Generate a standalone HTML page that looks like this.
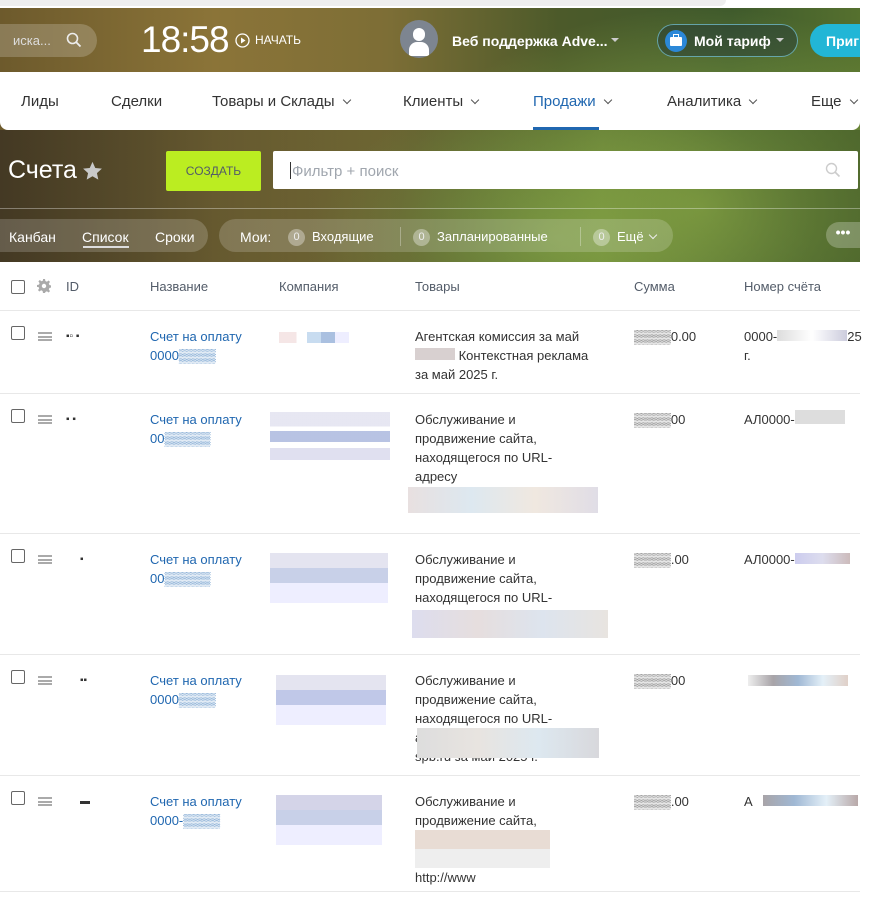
<!DOCTYPE html><html><head><meta charset="utf-8"><style>
*{margin:0;padding:0;box-sizing:border-box}
body{width:879px;height:908px;background:#fff;font-family:"Liberation Sans","Noto Sans CJK SC",sans-serif;position:relative;overflow:hidden;color:#333}
.bg{position:absolute;left:0;top:8px;width:860px;height:255px;background:radial-gradient(ellipse 300px 200px at 700px 200px,#8fae48 0%,rgba(120,150,60,0) 100%),radial-gradient(ellipse 250px 150px at 560px 230px,#7c9a45,rgba(0,0,0,0)),linear-gradient(90deg,#6d5a2c 0%,#8b7438 25%,#7d6e36 45%,#4c5a2a 65%,#3f5a2c 85%,#55702e 100%)}
.bgb{position:absolute;left:0;top:130px;width:860px;height:133px;background:linear-gradient(90deg,rgba(40,35,30,.6) 0%,rgba(60,70,40,.3) 40%,rgba(90,120,50,.2) 70%,rgba(40,60,30,.4) 100%)}
.topstrip{position:absolute;left:0;top:0;width:726px;height:6px;background:#eee;border-radius:0 0 6px 0}
.a{position:absolute;white-space:nowrap}
.nav{position:absolute;left:0;top:72px;width:860px;height:58px;background:#fff;border-radius:0 0 8px 8px}
.nav span{position:absolute;top:21px;font-size:15px;color:#333}
.chev{display:inline-block;width:6px;height:6px;border-right:1.5px solid #555;border-bottom:1.5px solid #555;transform:rotate(45deg);margin-left:9px;position:relative;top:-3px}
.pill{position:absolute;background:rgba(255,255,255,.18);border-radius:18px}
.cnt{display:inline-block;width:17px;height:17px;border-radius:9px;background:rgba(255,255,255,.35);font-size:11px;text-align:center;line-height:17px;color:#eee;margin-right:7px;vertical-align:middle}
.t{position:absolute;font-size:13px;line-height:19px;color:#333}
.l{color:#2067b0}
.hl{position:absolute;left:0;width:860px;height:1px;background:#e8e8e8}
.cb{position:absolute;left:11px;width:14px;height:14px;border:1.5px solid #666;border-radius:2px}
.ham{position:absolute;left:38px;width:14px;height:9px;border-top:2px solid #aaa;border-bottom:2px solid #aaa}
.ham:after{content:"";position:absolute;left:0;top:1.5px;width:14px;height:2px;background:#aaa}
.px{position:absolute;height:11px}
</style></head><body>
<div class="topstrip"></div>
<div class="bg"></div><div class="bgb"></div>
<div class="a" style="left:0;top:24px;width:97px;height:33px;border-radius:0 17px 17px 0;background:rgba(255,255,255,.2)"></div>
<div class="a" style="left:13px;top:33px;font-size:13px;color:#ddd">иска...</div>
<svg class="a" style="left:66px;top:32px" width="16" height="16"><circle cx="6.5" cy="6.5" r="5" fill="none" stroke="#eee" stroke-width="1.6"/><path d="M10 10l4.5 4.5" stroke="#eee" stroke-width="1.8"/></svg>
<div class="a" style="left:141px;top:19px;font-size:37px;color:#fff;font-weight:300;letter-spacing:-1px">18:58</div>
<svg class="a" style="left:235px;top:33px" width="15" height="15"><circle cx="7.5" cy="7.5" r="6.5" fill="none" stroke="#fff" stroke-width="1.3"/><path d="M6 4.5v6l4.5-3z" fill="#fff"/></svg>
<div class="a" style="left:255px;top:33px;font-size:12px;color:#fff">НАЧАТЬ</div>
<div class="a" style="left:400px;top:20px;width:38px;height:38px;border-radius:50%;background:#7d8590;overflow:hidden"><div style="position:absolute;left:13px;top:8px;width:12px;height:13px;border-radius:6px;background:#fff"></div><div style="position:absolute;left:9px;top:22px;width:20px;height:14px;border-radius:8px 8px 0 0;background:#fff"></div></div>
<div class="a" style="left:452px;top:33px;font-size:14px;color:#fff;font-weight:bold">Веб поддержка Adve...</div>
<div class="a" style="left:611px;top:38px;border:4px solid transparent;border-top:4px solid #ccc"></div>
<div class="a" style="left:657px;top:24px;width:141px;height:33px;border-radius:17px;border:1px solid rgba(120,200,220,.7);background:rgba(20,40,60,.35)"></div>
<div class="a" style="left:665px;top:30px;width:22px;height:22px;border-radius:50%;background:#2b88d8"><div style="position:absolute;left:5px;top:7px;width:12px;height:9px;background:#fff;border-radius:1px"></div><div style="position:absolute;left:8px;top:4px;width:6px;height:4px;border:1.5px solid #fff;border-bottom:none"></div></div>
<div class="a" style="left:694px;top:33px;font-size:14px;color:#fff;font-weight:bold">Мой тариф</div>
<div class="a" style="left:776px;top:38px;border:4px solid transparent;border-top:4px solid #ccc"></div>
<div class="a" style="left:810px;top:24px;width:60px;height:33px;border-radius:17px 0 0 17px;background:#22b6d6"></div>
<div class="a" style="left:826px;top:33px;font-size:14px;color:#fff;font-weight:bold">Приг</div>
<div class="a" style="left:860px;top:8px;width:19px;height:900px;background:#fff"></div>
<div class="nav">
<span style="left:21px">Лиды</span><span style="left:111px">Сделки</span><span style="left:212px">Товары и Склады<i class="chev"></i></span><span style="left:403px">Клиенты<i class="chev"></i></span><span style="left:533px;color:#2067b0">Продажи<i class="chev"></i></span><span style="left:667px">Аналитика<i class="chev"></i></span><span style="left:811px">Еще<i class="chev"></i></span>
<div style="position:absolute;left:533px;top:55px;width:66px;height:3px;background:#2067b0"></div>
</div>
<div class="a" style="left:8px;top:156px;font-size:25px;color:#fff;font-weight:300">Счета</div>
<svg class="a" style="left:82px;top:161px" width="21" height="20" viewBox="0 0 24 23"><path d="M12 1l3.2 7 7.6.8-5.7 5.1 1.6 7.5L12 17.6 5.3 21.4l1.6-7.5L1.2 8.8 8.8 8z" fill="#c9c9c9"/></svg>
<div class="a" style="left:166px;top:151px;width:95px;height:40px;background:#bbed21;border-radius:2px;font-size:12px;color:#535c69;text-align:center;line-height:40px">СОЗДАТЬ</div>
<div class="a" style="left:273px;top:151px;width:585px;height:38px;background:#fff;border-radius:2px"></div>
<div class="a" style="left:290px;top:162px;width:1px;height:17px;background:#333"></div>
<div class="a" style="left:292px;top:163px;font-size:15px;color:#a0a6ae">Фильтр + поиск</div>
<svg class="a" style="left:825px;top:162px" width="16" height="16"><circle cx="6.5" cy="6.5" r="5" fill="none" stroke="#ccc" stroke-width="1.4"/><path d="M10 10l4.5 4.5" stroke="#ccc" stroke-width="1.6"/></svg>
<div class="a" style="left:0;top:208px;width:860px;height:1px;background:rgba(255,255,255,.35)"></div>
<div class="pill" style="left:0;top:219px;width:208px;height:33px;border-radius:0 17px 17px 0"></div>
<div class="a" style="left:9px;top:229px;font-size:14px;color:#fff">Канбан</div>
<div class="a" style="left:82px;top:229px;font-size:14px;color:#fff">Список</div>
<div class="a" style="left:83px;top:246px;width:46px;height:2px;background:#ddd"></div>
<div class="a" style="left:155px;top:229px;font-size:14px;color:#fff">Сроки</div>
<div class="pill" style="left:219px;top:219px;width:454px;height:33px"></div>
<div class="a" style="left:240px;top:229px;font-size:14px;color:#fff">Мои:</div>
<div class="a" style="left:288px;top:228px;font-size:13px;line-height:17px;color:#fff"><span class="cnt">0</span>Входящие</div>
<div class="a" style="left:400px;top:227px;width:1px;height:19px;background:rgba(255,255,255,.3)"></div>
<div class="a" style="left:413px;top:228px;font-size:13px;line-height:17px;color:#fff"><span class="cnt">0</span>Запланированные</div>
<div class="a" style="left:580px;top:227px;width:1px;height:19px;background:rgba(255,255,255,.3)"></div>
<div class="a" style="left:593px;top:228px;font-size:13px;line-height:17px;color:#fff"><span class="cnt">0</span>Ещё <i class="chev" style="border-color:#eee;margin-left:3px"></i></div>
<div class="a" style="left:826px;top:222px;width:34px;height:26px;border-radius:13px 0 0 13px;background:rgba(255,255,255,.25);color:#fff;font-weight:bold;text-align:center;font-size:14px;line-height:20px">•••</div>

<div class="a" style="left:0;top:262px;width:860px;height:646px;background:#fff"></div>
<div class="cb" style="top:280px"></div>
<svg class="a" style="left:37px;top:279px" width="14" height="14" viewBox="0 0 14 14"><path d="M6 0h2l.4 2 1.5.7 1.7-1.2 1.4 1.4-1.2 1.7.7 1.5 2 .4v2l-2 .4-.7 1.5 1.2 1.7-1.4 1.4-1.7-1.2-1.5.7L8 14H6l-.4-2-1.5-.7-1.7 1.2-1.4-1.4 1.2-1.7L1.5 8 0 8V6l1.9-.4.7-1.5-1.2-1.7 1.4-1.4 1.7 1.2 1.5-.7z" fill="#aaa"/><circle cx="7" cy="7" r="2.2" fill="#fff"/></svg>
<div class="t" style="left:66px;top:277px;color:#535c69">ID</div>
<div class="t" style="left:150px;top:277px;color:#535c69">Название</div>
<div class="t" style="left:279px;top:277px;color:#535c69">Компания</div>
<div class="t" style="left:415px;top:277px;color:#535c69">Товары</div>
<div class="t" style="left:634px;top:277px;color:#535c69">Сумма</div>
<div class="t" style="left:744px;top:277px;color:#535c69">Номер счёта</div>
<div class="hl" style="top:310px"></div>

<div class="cb" style="top:326px"></div><div class="ham" style="top:332px"></div>
<div class="t" style="left:66px;top:327px;font-size:10px">▪▫ ▪</div>
<div class="t l" style="left:150px;top:327px">Счет на оплату<br>0000▒▒▒▒</div>
<div class="px" style="left:279px;top:332px;width:70px;background:linear-gradient(90deg,#f5e6e6 0 25%,#fff 25% 40%,#c8dcf0 40% 60%,#aac0e0 60% 80%,#eef 80%)"></div>
<div class="t" style="left:415px;top:327px">Агентская комиссия за май<br><span style="display:inline-block;width:40px;height:12px;background:#d8d0d0"></span> Контекстная реклама<br>за май 2025 г.</div>
<div class="t" style="left:634px;top:327px">▒▒▒▒0.00</div>
<div class="t" style="left:744px;top:327px">0000-<span style="display:inline-block;width:70px;height:11px;background:linear-gradient(90deg,#ddd,#fff,#ccd)"></span>25<br>г.</div>
<div class="hl" style="top:393px"></div>

<div class="cb" style="top:409px"></div><div class="ham" style="top:415px"></div>
<div class="t" style="left:66px;top:410px;font-size:10px">▪  ▪</div>
<div class="t l" style="left:150px;top:410px">Счет на оплату<br>00▒▒▒▒▒</div>
<div class="px" style="left:270px;top:412px;width:120px;height:48px;background:linear-gradient(180deg,#e4e4f0 0 30%,#fff 30% 40%,#b0bce0 40% 62%,#fff 62% 75%,#dde 75%);opacity:.9"></div>
<div class="t" style="left:415px;top:410px">Обслуживание и<br>продвижение сайта,<br>находящегося по URL-<br>адресу</div>
<div class="px" style="left:408px;top:487px;width:190px;height:26px;background:linear-gradient(90deg,#e8e0e0,#dde8f0,#f0e8e0,#e0dde6)"></div>
<div class="t" style="left:634px;top:410px">▒▒▒▒00</div>
<div class="t" style="left:744px;top:410px">АЛ0000-<span style="display:inline-block;width:50px;height:14px;background:#ddd"></span></div>
<div class="hl" style="top:533px"></div>

<div class="cb" style="top:549px"></div><div class="ham" style="top:555px"></div>
<div class="t" style="left:80px;top:550px;font-size:10px">▪</div>
<div class="t l" style="left:150px;top:550px">Счет на оплату<br>00▒▒▒▒▒</div>
<div class="px" style="left:270px;top:553px;width:118px;height:50px;background:linear-gradient(180deg,#e4e4f0 0 30%,#c8d0e8 30% 60%,#eef 60%)"></div>
<div class="t" style="left:415px;top:550px">Обслуживание и<br>продвижение сайта,<br>находящегося по URL-</div>
<div class="px" style="left:412px;top:610px;width:196px;height:28px;background:linear-gradient(90deg,#dde,#e6dede,#dde4ee,#e8e4e0)"></div>
<div class="t" style="left:634px;top:550px">▒▒▒▒.00</div>
<div class="t" style="left:744px;top:550px">АЛ0000-<span style="display:inline-block;width:55px;height:11px;background:linear-gradient(90deg,#cce,#dde,#cbb)"></span></div>
<div class="hl" style="top:654px"></div>

<div class="cb" style="top:670px"></div><div class="ham" style="top:676px"></div>
<div class="t" style="left:80px;top:671px;font-size:10px">▪▪</div>
<div class="t l" style="left:150px;top:671px">Счет на оплату<br>0000▒▒▒▒</div>
<div class="px" style="left:276px;top:675px;width:110px;height:50px;background:linear-gradient(180deg,#e4e4f0 0 30%,#c0c8e8 30% 60%,#eef 60%)"></div>
<div class="t" style="left:415px;top:671px">Обслуживание и<br>продвижение сайта,<br>находящегося по URL-<br>а<br>spb.ru за май 2025 г.</div>
<div class="px" style="left:417px;top:728px;width:182px;height:30px;background:linear-gradient(90deg,#ddd,#e8e4e0,#dde8f0,#d8d8dc)"></div>
<div class="t" style="left:634px;top:671px">▒▒▒▒00</div>
<div class="px" style="left:748px;top:675px;width:100px;background:linear-gradient(90deg,#eee,#a8a4a8,#a0b8d4,#e4f0f8,#e0d0c8)"></div>
<div class="hl" style="top:775px"></div>

<div class="cb" style="top:791px"></div><div class="ham" style="top:797px"></div>
<div class="t" style="left:80px;top:792px;font-size:10px">▬</div>
<div class="t l" style="left:150px;top:792px">Счет на оплату<br>0000-▒▒▒▒</div>
<div class="px" style="left:276px;top:795px;width:106px;height:50px;background:linear-gradient(180deg,#d4d4e8 0 30%,#c8d0e8 30% 60%,#eef 60%)"></div>
<div class="t" style="left:415px;top:792px">Обслуживание и<br>продвижение сайта,<br><br><br>http://www</div>
<div class="px" style="left:415px;top:830px;width:135px;height:38px;background:linear-gradient(180deg,#e8dcd4 0 50%,#eee 50%)"></div>
<div class="t" style="left:634px;top:792px">▒▒▒▒.00</div>
<div class="t" style="left:744px;top:792px">А<span style="display:inline-block;width:95px;height:11px;margin-left:10px;background:linear-gradient(90deg,#a8a4a8,#a0b8d4,#e4f0f8,#b8a8a8)"></span></div>
<div class="hl" style="top:891px"></div>
</body></html>
